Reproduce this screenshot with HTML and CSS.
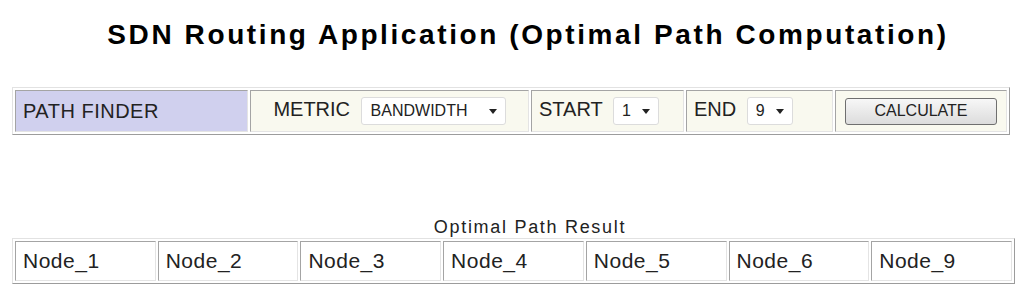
FILE: index.html
```html
<!DOCTYPE html>
<html lang="en">
<head>
    <meta charset="UTF-8">
    <meta name="viewport" content="width=device-width, initial-scale=1.0">
    <title>SDN Routing Application</title>
    <link rel="stylesheet" href="styles.css">
</head>
<body>
    <h1>SDN Routing Application (Optimal Path Computation)</h1>

    <table class="toolbar">
        <tr>
            <td class="finder">PATH FINDER</td>
            <td class="metric">
                METRIC
                <span class="select-wrap wide">
                    <select id="metric">
                        <option>BANDWIDTH</option>
                        <option>HOP COUNT</option>
                        <option>DELAY</option>
                    </select>
                </span>
            </td>
            <td class="pick">
                START
                <span class="select-wrap">
                    <select id="start">
                        <option>1</option><option>2</option><option>3</option>
                        <option>4</option><option>5</option><option>6</option>
                        <option>7</option><option>8</option><option>9</option>
                    </select>
                </span>
            </td>
            <td class="pick">
                END
                <span class="select-wrap">
                    <select id="end">
                        <option>9</option><option>8</option><option>7</option>
                        <option>6</option><option>5</option><option>4</option>
                        <option>3</option><option>2</option><option>1</option>
                    </select>
                </span>
            </td>
            <td class="action">
                <button id="calculate">CALCULATE</button>
            </td>
        </tr>
    </table>

    <table class="result">
        <caption>Optimal Path Result</caption>
        <tr id="pathRow">
            <td>Node_1</td>
            <td>Node_2</td>
            <td>Node_3</td>
            <td>Node_4</td>
            <td>Node_5</td>
            <td>Node_6</td>
            <td>Node_9</td>
        </tr>
    </table>
</body>
</html>
```

FILE: styles.css
```css
body {
    margin: 0;
    padding: 17px 0 0 12px;
    font-family: "Liberation Sans", Arial, sans-serif;
    color: #222;
    background-color: #ffffff;
}
h1 {
    margin: 0 0 34px;
    padding-left: 20px;
    font-size: 28px;
    line-height: 36px;
    letter-spacing: 2.6px;
    text-align: center;
    color: #000;
}
table {
    border-collapse: separate;
    border-spacing: 2px;
    border: 1px solid;
    border-color: #e2e2e2 #9c9c9c #9c9c9c #e2e2e2;
    table-layout: fixed;
}
td {
    border: 1px solid;
    border-color: #a4a4a4 #e4e4e4 #e4e4e4 #a4a4a4;
    padding: 0;
}
.toolbar {
    width: 998px;
    height: 48px;
}
.toolbar td {
    font-size: 20px;
    background-color: #f9f9ef;
    white-space: nowrap;
}
.toolbar .finder {
    width: 224px;
    padding-left: 7px;
    letter-spacing: 0.5px;
    background-color: #d0d0ee;
}
.toolbar .metric {
    width: 277px;
    text-align: center;
}
.toolbar .pick {
    padding-left: 7px;
}
.toolbar .pick:nth-child(3) {
    width: 144px;
}
.toolbar .pick:nth-child(4) {
    width: 138px;
}
.toolbar .action {
    text-align: center;
}
.select-wrap {
    position: relative;
    display: inline-block;
    vertical-align: middle;
    margin-left: 5px;
}
.select-wrap::after {
    content: "";
    position: absolute;
    right: 9px;
    top: 12px;
    border-left: 4px solid transparent;
    border-right: 4px solid transparent;
    border-top: 5px solid #222;
    pointer-events: none;
}
select {
    appearance: none;
    -webkit-appearance: none;
    width: 46px;
    height: 28px;
    padding: 0 0 2px 8px;
    border: 1px solid #dcdcdc;
    border-radius: 3px;
    background-color: #fff;
    font-family: "Liberation Sans", Arial, sans-serif;
    font-size: 16px;
    color: #222;
}
.wide select {
    width: 145px;
    padding-left: 9px;
}
button {
    width: 152px;
    height: 27px;
    border: 1px solid #6f6f6f;
    border-radius: 3px;
    background: linear-gradient(#f7f7f7, #dcdcdc);
    font-family: "Liberation Sans", Arial, sans-serif;
    font-size: 16px;
    color: #222;
    cursor: pointer;
}
button:hover {
    background: linear-gradient(#ffffff, #e6e6e6);
}
.result {
    width: 1003px;
    margin-top: 81px;
}
.result caption {
    padding-left: 33px;
    font-size: 18px;
    line-height: 22px;
    letter-spacing: 1.7px;
}
.result td {
    height: 38px;
    padding-left: 7px;
    font-size: 21px;
    letter-spacing: 0.5px;
    background-color: #fff;
}
```
